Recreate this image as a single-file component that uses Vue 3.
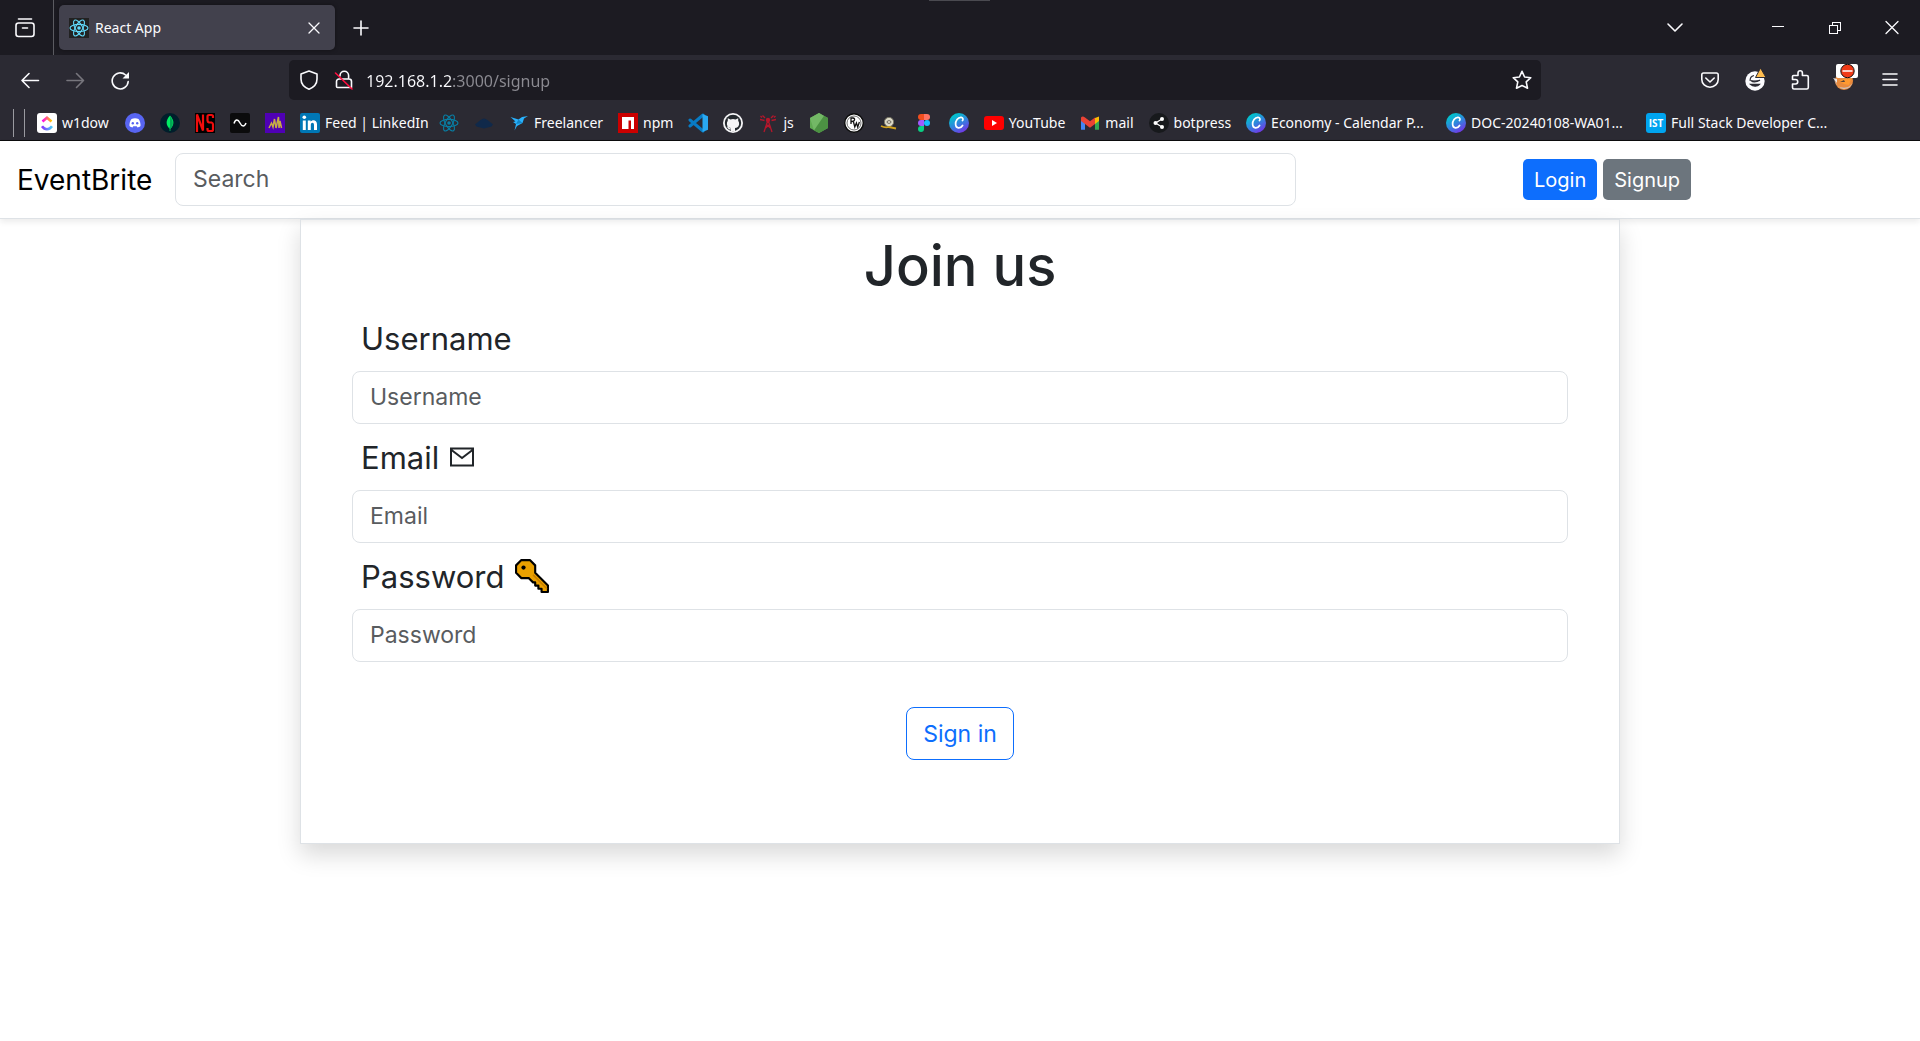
<script setup>
import { ref } from 'vue'

const address = ref('192.168.1.2:3000/signup')
const search = ref('')
const username = ref('')
const email = ref('')
const password = ref('')
</script>

<template>
  <div class="window">
    <svg class="defs" aria-hidden="true">
      <symbol id="react" viewBox="0 0 20 20">
        <g fill="none" stroke="currentColor" stroke-width="1.1">
          <ellipse cx="10" cy="10" rx="9" ry="3.6" />
          <ellipse cx="10" cy="10" rx="9" ry="3.6" transform="rotate(60 10 10)" />
          <ellipse cx="10" cy="10" rx="9" ry="3.6" transform="rotate(120 10 10)" />
        </g>
        <circle cx="10" cy="10" r="1.8" fill="currentColor" />
      </symbol>
      <symbol id="canva" viewBox="0 0 20 20">
        <circle cx="10" cy="10" r="10" fill="url(#canvaFill)" />
        <path d="M13.4 7.6c.9-.6 1-3-1.200-3.300C8.800 4 6.400 8 6.600 11.200c.2 4.800 5 4.600 7 1.300" fill="none" stroke="#fff" stroke-width="1.700" stroke-linecap="round" />
      </symbol>
      <linearGradient id="canvaFill" x1="0.2" y1="0" x2="0.8" y2="1">
        <stop offset="0.1" stop-color="#00c4cc" />
        <stop offset="0.5" stop-color="#2f86dd" />
        <stop offset="1" stop-color="#7d2ae8" />
      </linearGradient>
      <linearGradient id="clickTop"><stop stop-color="#ff02f0" /><stop offset="1" stop-color="#ffc800" /></linearGradient>
      <linearGradient id="clickBottom"><stop stop-color="#8930fd" /><stop offset="1" stop-color="#49ccf9" /></linearGradient>
    </svg>

    <header class="chrome">
      <div class="tabstrip">
        <button class="view" aria-label="Recent browsing">
          <svg class="ic" viewBox="0 0 20 20"><path d="M3.500 1h13" /><rect x="1" y="5" width="18" height="13.500" rx="2.500" /><path d="M7.500 10h5" /></svg>
        </button>
        <div class="tab">
          <svg class="favicon" viewBox="0 0 20 20"><use href="#react" /></svg>
          <span class="tab-title">React App</span>
          <button class="tab-close" aria-label="Close tab">
            <svg class="ic thin" viewBox="0 0 20 20"><path d="M5 5l10 10M15 5L5 15" /></svg>
          </button>
        </div>
        <button class="tool" aria-label="New tab">
          <svg class="ic" viewBox="0 0 20 20"><path d="M10 3v14M3 10h14" /></svg>
        </button>
        <span class="grow"></span>
        <button class="tool all-tabs" aria-label="List all tabs">
          <svg class="ic" viewBox="0 0 20 20"><path d="M3 6l7 7 7-7" /></svg>
        </button>
        <button class="win" aria-label="Minimize">
          <svg class="ic crisp" viewBox="0 0 20 20"><path d="M4 8.500h12" /></svg>
        </button>
        <button class="win" aria-label="Restore">
          <svg class="ic crisp" viewBox="0 0 20 20"><path d="M4.500 7.500h8v8h-8zM7.500 7V4.500h8v8H13" /></svg>
        </button>
        <button class="win" aria-label="Close">
          <svg class="ic thin" viewBox="0 0 20 20"><path d="M4 3.500l12 12M16 3.500L4 15.500" /></svg>
        </button>
        <span class="notch"></span>
      </div>

      <div class="toolbar">
        <button class="tool" aria-label="Back">
          <svg class="ic" viewBox="0 0 20 20"><path d="M17.500 10.500H1M8 3.500l-7 7 7 7" /></svg>
        </button>
        <button class="tool dim" aria-label="Forward">
          <svg class="ic" viewBox="0 0 20 20"><path d="M1 10.500H17.500M10.500 3.500l7 7-7 7" /></svg>
        </button>
        <button class="tool" aria-label="Reload">
          <svg class="ic" viewBox="0 0 20 20"><path d="M17.200 11.500a8 8 0 1 1-2.600-6.500" /><path class="solid" d="M18 2v6.500h-6.500z" /></svg>
        </button>
        <span class="spacer"></span>
        <div class="urlbar">
          <svg class="ic" viewBox="0 0 20 20"><path d="M10 1L18 4v5c0 4.500-2.500 8-8 10.200C4.500 17 2 13.500 2 9V4z" /></svg>
          <svg class="ic" viewBox="0 0 20 20"><path d="M6 6V5.500a4.300 4.300 0 0 1 8.600 0V9M5 9H15a2.500 2.500 0 0 1 2.500 2.500v6H3.500a1 1 0 0 1-1-1v-5A2.500 2.500 0 0 1 5 9z" /><path class="slash" d="M1.500 3l16.500 16" /></svg>
          <input v-model="address" class="address" type="text" aria-label="Address" spellcheck="false">
          <svg class="ic" viewBox="0 0 20 20"><path d="M10 1.300l2.600 5.700 6.200.7-4.600 4.200 1.300 6.300L10 15.500l-5.500 2.700 1.300-6.300L1.200 7.700l6.200-.7z" /></svg>
        </div>
        <span class="spacer"></span>
        <button class="tool" aria-label="Save to Pocket">
          <svg class="ic" viewBox="0 0 20 20"><path d="M3.500 3h13a1.700 1.700 0 0 1 1.700 1.700V9.500a8.200 7.700 0 0 1-16.400 0V4.700A1.700 1.700 0 0 1 3.500 3z" /><path d="M5.800 8l4.200 4 4.200-4" /></svg>
        </button>
        <button class="tool" aria-label="Grammarly">
          <svg class="badge-ic" viewBox="0 0 24 24"><circle cx="12" cy="13" r="9.700" fill="#fbfbfe" /><path d="M8 12.500q3 2.800 9-.3M7.500 16.300c2.500 2.500 7 2.500 9 0z" fill="#2b2a33" stroke="#2b2a33" stroke-width="1.300" /><path d="M11 7.500a5 5 0 0 0-3.800 5.500" fill="none" stroke="#2b2a33" stroke-width="1.200" /><path d="M12.500 9.500L17.500 0l5.500 9.500z" fill="#ffbd4f" stroke="#2b2a33" stroke-width="1" /></svg>
        </button>
        <button class="tool" aria-label="Extensions">
          <svg class="ic" viewBox="0 0 20 20"><path d="M2.500 8V6.500a1 1 0 0 1 1-1H8V3a2.200 2.200 0 0 1 4.400 0v2.500h4.400a1.500 1.500 0 0 1 1.500 1.500v10.500a1.500 1.500 0 0 1-1.500 1.500H4a1.500 1.500 0 0 1-1.500-1.500V14H5.500a2 2 0 0 0 0-4.500H2.500z" /></svg>
        </button>
        <button class="tool" aria-label="Profile blocked">
          <svg class="fox" viewBox="0 0 26 32"><circle cx="12" cy="17" r="9" fill="#e98a3c" /><path d="M2 14c1 13 19 13 20 0-1 8-6 11-10 11S4 21 2 14z" fill="#c9c6c8" /><path d="M1 14l4 1v4z" fill="#e8e5e5" /><path d="M7 17l5-2 7 0-2 6-5-1z" fill="#ff9a30" /><path d="M8 18l4-2 1 2z" fill="#55423b" /><rect x="4" y="0" width="22" height="14" rx="2" fill="#fff" /><circle cx="15.500" cy="7" r="6.700" fill="#f03a17" stroke="#111" stroke-width="1" /><path d="M10.500 7h10" stroke="#fff" stroke-width="1.500" /></svg>
        </button>
        <button class="tool" aria-label="Menu">
          <svg class="ic" viewBox="0 0 20 20"><path d="M3 4h14M3 9.500h14M3 15h14" /></svg>
        </button>
      </div>

      <nav class="bookmarks" aria-label="Bookmarks">
        <span class="rule"></span>
        <span class="rule"></span>
        <a href="#" class="short"><svg viewBox="0 0 20 20"><rect width="20" height="20" rx="3" fill="#fff" /><path d="M5.500 8.500L10 4.700l4.500 3.800" fill="none" stroke="url(#clickTop)" stroke-width="2.600" /><path d="M5 13.300c3 4 7 4 10 0" fill="none" stroke="url(#clickBottom)" stroke-width="2.600" /></svg><span>w1dow</span></a>
        <a href="#" aria-label="Discord"><svg viewBox="0 0 20 20"><circle cx="10" cy="10" r="10" fill="#5865f2" /><path d="M6.500 6c2-1 5-1 7 0 1.500 2 2.200 4.500 2 7-1.200 1-2 1.300-3 1.500l-.8-1.300H8.300L7.500 14.500c-1-.2-1.800-.5-3-1.500-.2-2.500.5-5 2-7z" fill="#fff" /><circle cx="7.800" cy="10.300" r="1.200" fill="#5865f2" /><circle cx="12.200" cy="10.300" r="1.200" fill="#5865f2" /></svg></a>
        <a href="#" aria-label="MongoDB"><svg viewBox="0 0 20 20"><circle cx="10" cy="10" r="10" fill="#001e2b" /><path d="M10 2.500c5 5.500 4 10 0 13.500-4-3.500-5-8 0-13.500z" fill="#00ed64" /><path d="M10 3c4 5.500 3.500 10 0 13z" fill="#00a854" /><path d="M10 14v4" stroke="#0a9b54" /></svg></a>
        <a href="#" aria-label="NS"><svg viewBox="0 0 20 20"><rect width="20" height="20" fill="#000" /><path d="M2 19V1.500l6 16V1.500M18 5V3.500q0-1.500-1.500-1.500h-2.500q-1.500 0-1.500 1.500v4q0 1.500 1.500 2h2.500q1.500.5 1.500 2v5q0 1.500-1.500 1.500h-2.500q-1.500 0-1.500-1.500V15" fill="none" stroke="#f20d0d" stroke-width="2.200" /></svg></a>
        <a href="#" aria-label="Wave"><svg viewBox="0 0 20 20"><rect width="20" height="20" rx="2" fill="#0b0b0c" /><path d="M4 10.500c1.500-4.500 4-4.500 6-.5s4.500 4 6 0" fill="none" stroke="#fff" stroke-width="1.500" /></svg></a>
        <a href="#" aria-label="Analytics"><svg viewBox="0 0 20 20"><rect width="20" height="20" fill="#4f00b5" /><path d="M4 15l2.500-5 1.500 4 1.500-8 1.500 9 2.500-11 .5 11 1-7 1.500 7" fill="none" stroke="#c7ad45" stroke-width="1.500" /></svg></a>
        <a href="#" class="medium"><svg viewBox="0 0 20 20"><rect width="20" height="20" rx="2" fill="#0077b5" /><circle cx="4.300" cy="4.300" r="1.800" fill="#fff" /><path d="M2.800 7.500h3V17h-3zM7.800 7.500h2.800v1.300c1.700-2.500 6.400-2 6.400 2.500V17h-3v-5c0-3-3.200-2.700-3.200 0v5h-3z" fill="#fff" /></svg><span>Feed | LinkedIn</span></a>
        <a href="#" class="react-teal" aria-label="React"><svg><use href="#react" /></svg></a>
        <a href="#" aria-label="Cloud"><svg viewBox="0 0 20 20"><path d="M1 11.500L6.500 7q3.500-3 7 0L19 11.500l-1.500 2L10 15.500l-7.500-2z" fill="#10294a" /></svg></a>
        <a href="#"><svg viewBox="0 0 20 20"><path d="M1.500 4l8 2.500L13 4l6-1-4 2.500-1.500 4.500-5.500 3L5.500 17.500 7 11 4 9l2.500-.5z" fill="#29b2fe" /><path d="M9.500 6.500l4 3.500-6.500 1z" fill="#1186c9" /></svg><span>Freelancer</span></a>
        <a href="#"><svg viewBox="0 0 20 20"><rect width="20" height="20" fill="#cb0000" /><path d="M4 4h12v12h-3V7.500h-2.500V16H4z" fill="#fff" /></svg><span>npm</span></a>
        <a href="#" aria-label="VS Code"><svg viewBox="0 0 20 20"><path d="M15 2L2 13M15 18L2 7" stroke="#087bc4" stroke-width="3" stroke-linecap="round" /><path d="M14.500 1L20 3.200v13.600L14.500 19z" fill="#29a9f2" /></svg></a>
        <a href="#" aria-label="GitHub"><svg viewBox="0 0 20 20"><circle cx="10" cy="10" r="10" fill="#f5f5f7" /><circle cx="10" cy="10" r="8.200" fill="#24292e" /><path d="M8 18v-3c-3.300-.4-4.600-2.400-4-5.500l.8-1.700V5.200l2.600 1.200q2.600-.6 5.200 0l2.600-1.200v2.600l.8 1.700c.6 3.100-.7 5.100-4 5.500v3z" fill="#f5f5f7" /><path d="M4.500 13.500q1 2.500 3.500 2.500" fill="none" stroke="#f5f5f7" stroke-width="1.200" /></svg></a>
        <a href="#"><svg viewBox="0 0 20 20"><g fill="none" stroke="#b5162b" stroke-width="1.300"><path d="M10 7L6 19M10 7l4 12M8.500 11.500l4.500 4M11.500 11.500l-4.500 4M7 5L4.500 2.500M13 5l2.500-2.500M6.500 7.500L2 6.500M13.500 7.500L18 6.500M4 4.500L2.500 3M16 4.500L17.500 3" /></g><circle cx="10" cy="7" r="2.200" fill="#b5162b" /></svg><span>js</span></a>
        <a href="#" aria-label="Node.js"><svg viewBox="0 0 20 20"><path d="M10 0l9 5v10l-9 5-9-5V5z" fill="#5fa952" /><path d="M1 5l4 12.500L15 3 10 0z" fill="#73b866" /><path d="M19 5v10l-9 5-5-2.500L15 3z" fill="#4c9143" /></svg></a>
        <a href="#" aria-label="PW"><svg viewBox="0 0 20 20"><circle cx="10" cy="10" r="9.300" fill="#fff" stroke="#0b0b0b" stroke-width="1.400" /><circle cx="10" cy="10" r="7" fill="none" stroke="#333" stroke-width=".7" /><path d="M7 11V5h2q2 .3 1.500 2T7.500 8.500M9.500 9l1.300 5 1.600-4 1.300 4 1.700-5" fill="none" stroke="#111" stroke-width="1.300" /></svg></a>
        <a href="#" aria-label="Snail"><svg viewBox="0 0 20 20"><circle cx="10" cy="9" r="4.600" fill="#dedbc9" stroke="#7b7867" /><path d="M8 9q2-3 4 0-2 3-4 0z" fill="none" stroke="#77736a" stroke-width="1.200" /><path d="M2 13q4 2 8 1l7 1.500" fill="none" stroke="#d2a21e" stroke-width="1.800" /></svg></a>
        <a href="#" aria-label="Figma"><svg viewBox="0 0 20 20"><path d="M10 1H7a3 3 0 0 0 0 6h3z" fill="#f24e1e" /><path d="M10 1h3a3 3 0 0 1 0 6h-3z" fill="#ff7262" /><path d="M10 7H7a3 3 0 0 0 0 6h3z" fill="#a259ff" /><circle cx="13" cy="10" r="3" fill="#1abcfe" /><path d="M10 13H7a3 3 0 1 0 3 3z" fill="#0acf83" /></svg></a>
        <a href="#" aria-label="Canva"><svg><use href="#canva" /></svg></a>
        <a href="#"><svg viewBox="0 0 20 20"><rect y="3" width="20" height="14" rx="3" fill="#f00" /><path d="M8 7l5 3-5 3z" fill="#fff" /></svg><span>YouTube</span></a>
        <a href="#"><svg viewBox="0 0 20 20"><path d="M1 5v11.700h4V8z" fill="#4285f4" /><path d="M19 5v11.700h-4V8z" fill="#34a853" /><path d="M15 5l4-1.500V8l-4 3z" fill="#fbbc04" /><path d="M1 4.500q1.500-2 4 0l5 3.800 5-3.800V11l-5 3.700L5 11 1 8z" fill="#ea4335" /></svg><span>mail</span></a>
        <a href="#"><svg viewBox="0 0 20 20"><circle cx="10" cy="10" r="10" fill="#17191c" /><path d="M13 6l-6.500 4 6.500 4" fill="none" stroke="#fff" stroke-width="1.200" /><circle cx="13" cy="6" r="2" fill="#fff" /><circle cx="6.500" cy="10" r="2" fill="#fff" /><circle cx="13" cy="14" r="2" fill="#fff" /></svg><span>botpress</span></a>
        <a href="#" class="long"><svg><use href="#canva" /></svg><span>Economy - Calendar P...</span></a>
        <a href="#" class="long"><svg><use href="#canva" /></svg><span>DOC-20240108-WA01...</span></a>
        <a href="#" class="long"><svg viewBox="0 0 20 20"><rect width="20" height="20" rx="3" fill="#00a4ef" /><text x="10" y="14" text-anchor="middle" font-family="Open Sans, sans-serif" font-weight="700" font-size="10">IST</text></svg><span>Full Stack Developer C...</span></a>
      </nav>
    </header>

    <div class="page">
      <nav class="navbar">
        <a class="brand" href="#">EventBrite</a>
        <input v-model="search" class="field search" type="search" placeholder="Search" aria-label="Search">
        <div class="actions">
          <button class="btn primary">Login</button>
          <button class="btn secondary">Signup</button>
        </div>
      </nav>

      <main class="card">
        <h1>Join us</h1>
        <form @submit.prevent>
          <label for="username">Username</label>
          <input id="username" v-model="username" class="field" type="text" placeholder="Username">
          <label for="email">Email
            <svg class="mail" viewBox="0 0 24 20"><path d="M1 1.500h22v17H1zM1.500 3L12 11 22.500 3" /></svg>
          </label>
          <input id="email" v-model="email" class="field" type="email" placeholder="Email">
          <label for="password">Password
            <svg class="key" viewBox="0 0 32 32"><path d="M6 1h8l5 5v7l12 12v6h-6v-3h-3v-3h-3v-3h-2l-3-3-1-1H6L1 13V6z" fill="#eaa000" stroke="#000" stroke-width="2" stroke-linejoin="round" /><path d="M17 15l13 13" stroke="#c98000" stroke-width="1.500" /><circle cx="8" cy="8" r="2" fill="#000" /></svg>
          </label>
          <input id="password" v-model="password" class="field" type="password" placeholder="Password">
          <button class="submit" type="submit">Sign in</button>
        </form>
      </main>
    </div>
  </div>
</template>

<style>
body {
  margin: 0;
  background: #fff;
}
</style>

<style scoped>
* {
  box-sizing: border-box;
}
button {
  padding: 0;
  border: 0;
  background: none;
  color: inherit;
  font: inherit;
}
.window {
  min-height: 100vh;
}
.defs {
  position: absolute;
  width: 0;
  height: 0;
}
.chrome {
  background: #2b2a33;
  border-bottom: 1px solid #0c0c0d;
  color: #fbfbfe;
  font: 14px/20px "Noto Sans", sans-serif;
}
.ic {
  flex: none;
  width: 20px;
  height: 20px;
  fill: none;
  stroke: currentColor;
  stroke-width: 1.6;
  stroke-linecap: round;
  stroke-linejoin: round;
}
.thin {
  stroke-width: 1.3;
}
.crisp {
  stroke-width: 1;
  stroke-linecap: butt;
  shape-rendering: crispEdges;
}
.solid {
  fill: currentColor;
  stroke: none;
}
.slash {
  stroke: #ff0f3f;
}
.tabstrip {
  position: relative;
  display: flex;
  align-items: center;
  height: 55px;
  background: #1c1b22;
}
.notch {
  position: absolute;
  top: 0;
  left: calc(50% - 31px);
  width: 61px;
  height: 1px;
  background: #4a4a50;
}
.view {
  display: flex;
  align-items: center;
  width: 54px;
  height: 100%;
  padding-left: 15px;
  border-right: 1px solid #5b5b61;
}
.tab {
  display: flex;
  align-items: center;
  gap: 6px;
  width: 276px;
  height: 45px;
  margin: 0 3px 0 5px;
  padding: 0 11px 0 10px;
  border-radius: 5px;
  background: #42414d;
  box-shadow: 0 0 4px rgba(0, 0, 0, 0.4);
}
.favicon {
  width: 20px;
  height: 20px;
  background: #222;
  color: #61dafb;
}
.tab-title {
  flex: 1;
  padding-top: 1px;
}
.tab-close {
  display: flex;
}
.tool,
.win {
  display: flex;
  align-items: center;
  justify-content: center;
  flex: none;
  width: 45px;
  height: 40px;
}
.win {
  width: 57px;
  height: 55px;
}
.all-tabs {
  margin-right: 52px;
}
.grow {
  flex: 1;
}
.dim {
  color: #77767d;
}
.toolbar {
  display: flex;
  align-items: center;
  height: 50px;
  padding: 0 8px;
}
.spacer {
  flex: none;
  width: 146px;
}
.urlbar {
  display: flex;
  align-items: center;
  flex: 1;
  gap: 15px;
  height: 40px;
  padding: 0 9px 0 10px;
  border-radius: 5px;
  background: #1c1b22;
}
.address {
  flex: 1;
  min-width: 0;
  margin-left: -3px;
  padding: 2px 0 0;
  border: 0;
  outline: 0;
  background: linear-gradient(90deg, #fbfbfe 87px, #8c8b92 87px);
  background-clip: text;
  color: transparent;
  font: 16px/24px "Noto Sans", sans-serif;
}
.badge-ic {
  width: 24px;
  height: 24px;
}
.fox {
  width: 26px;
  height: 32px;
}
.bookmarks {
  display: flex;
  align-items: center;
  gap: 15px;
  height: 35px;
  padding-left: 13px;
  overflow: hidden;
}
.rule {
  flex: none;
  width: 1px;
  height: 28px;
  background: #9a9aa0;
}
.rule + .rule {
  margin-left: -5px;
  margin-right: -3px;
}
.bookmarks a {
  display: flex;
  align-items: center;
  flex: none;
  gap: 5px;
  color: inherit;
  text-decoration: none;
  white-space: nowrap;
}
.bookmarks svg {
  flex: none;
  width: 20px;
  height: 20px;
}
.bookmarks text {
  fill: #fff;
}
.bookmarks .short {
  width: 73px;
}
.bookmarks .medium {
  width: 124px;
}
.bookmarks .long {
  width: 185px;
}
.react-teal svg {
  color: #087ea4;
}
.page {
  padding-bottom: 48px;
  color: #212529;
  font-family: Inter, sans-serif;
}
.navbar {
  display: flex;
  align-items: center;
  height: 78px;
  padding: 0 18px 0 17px;
  border-bottom: 1px solid #dee2e6;
  box-shadow: 0 3px 6px rgba(0, 0, 0, 0.08);
}
.brand {
  flex: none;
  width: 158px;
  color: #000;
  font-size: 28px;
  text-decoration: none;
}
.field {
  display: block;
  width: 100%;
  height: 53px;
  padding: 0 17px 1px;
  border: 1px solid #dee2e6;
  border-radius: 8px;
  outline: 0;
  background: #fff;
  color: #212529;
  font: 23px/33px Inter, sans-serif;
}
.field::placeholder {
  color: #595c5f;
  opacity: 1;
}
.search {
  flex: 1;
}
.actions {
  display: flex;
  gap: 6px;
  width: 606px;
  padding-left: 227px;
}
.btn {
  height: 41px;
  padding: 0 11px;
  border-radius: 5px;
  color: #fff;
  font-size: 20px;
}
.primary {
  background: #0d6efd;
}
.secondary {
  background: #6c757d;
}
.card {
  width: 1320px;
  max-width: 100%;
  margin: 0 auto;
  padding: 9px 51px 83px;
  border: 1px solid #dee2e6;
  box-shadow: 0 11px 22px rgba(0, 0, 0, 0.15);
}
h1 {
  margin: 0 0 2px;
  font-size: 56px;
  font-weight: 500;
  line-height: 74px;
  text-align: center;
}
form {
  display: flex;
  flex-direction: column;
}
label {
  display: flex;
  align-items: center;
  gap: 11px;
  height: 66px;
  padding-left: 9px;
  font-size: 31px;
}
.mail {
  width: 24px;
  height: 20px;
  fill: none;
  stroke: currentColor;
  stroke-width: 2;
}
.key {
  width: 34px;
  height: 34px;
}
.submit {
  align-self: center;
  height: 53px;
  margin-top: 45px;
  padding: 0 16px;
  border: 1px solid #0d6efd;
  border-radius: 8px;
  color: #0d6efd;
  font-size: 23px;
}
</style>
